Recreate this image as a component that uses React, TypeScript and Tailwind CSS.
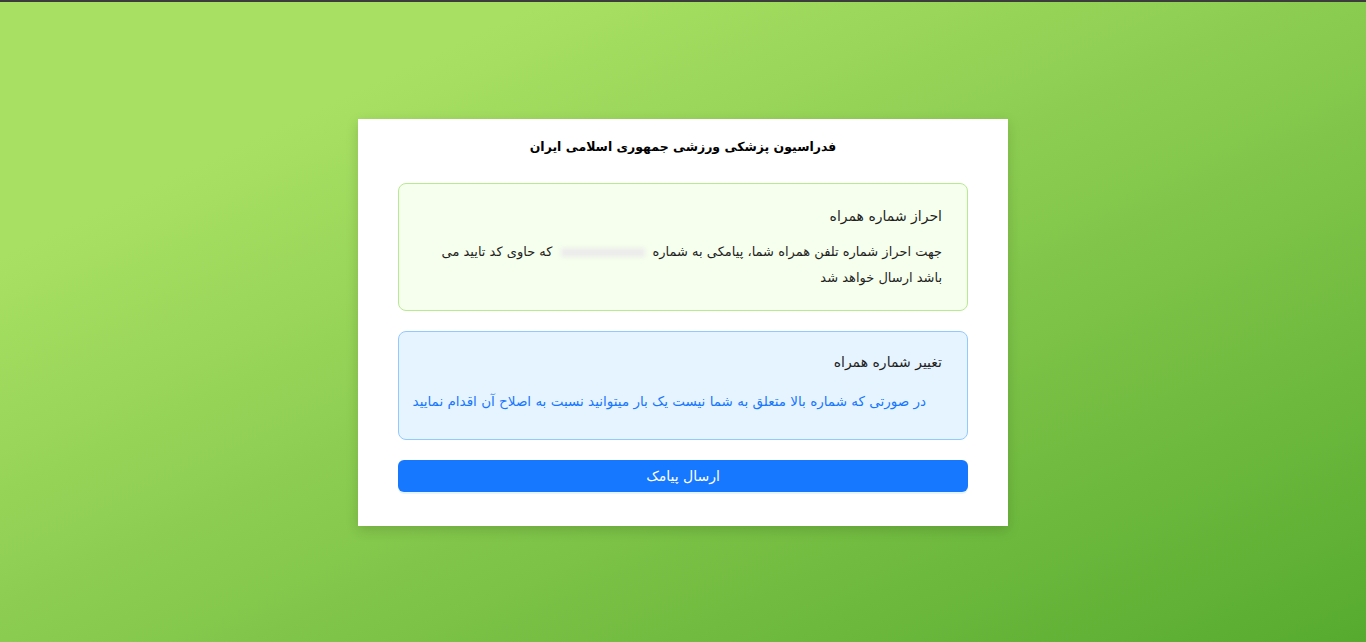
export default function App() {
  return (
    <div
      dir="rtl"
      className="min-h-[642px] w-full border-t-2 border-[#3c3c3c] bg-gradient-to-br from-[#a8e063] from-20% to-[#56ab2f] flex justify-center pt-[117px]"
      style={{ fontFamily: '"DejaVu Sans", "Noto Sans", sans-serif' }}
    >
      <div className="w-[650px] h-[407px] bg-white shadow-[0_4px_12px_rgba(0,0,0,0.15)] px-10 pt-[19px]">
        <h1 className="text-center text-[12.5px] font-bold text-black leading-[18px]">
          فدراسیون پزشکی ورزشی جمهوری اسلامی ایران
        </h1>

        <div className="mt-[27px] rounded-lg border border-[#b7eb8f] bg-[#f6ffed] pr-[25px] pl-4 pt-[22px] pb-[19px]">
          <div className="text-[14px] text-[#1f1f1f] leading-[20px]">احراز شماره همراه</div>
          <p className="mt-[13px] text-[13px] leading-[26px] text-[#1f1f1f]">
            <span>جهت احراز شماره تلفن همراه شما، پیامکی به شماره</span>
            <span className="inline-block align-middle mx-2 w-[84px] h-[9px] bg-[#ececec] blur-[2px]" />
            <span>که حاوی کد تایید می</span>
            <br />
            <span>باشد ارسال خواهد شد</span>
          </p>
        </div>

        <div className="mt-[20px] rounded-lg border border-[#91caff] bg-[#e6f4ff] pr-[25px] pl-2 pt-[20px] pb-[28px]">
          <div className="text-[14px] text-[#1f1f1f] leading-[20px]">تغییر شماره همراه</div>
          <p className="mt-[19px] pr-4 text-[13.5px] leading-[20px] text-[#1677ff] whitespace-nowrap">
            در صورتی که شماره بالا متعلق به شما نیست یک بار میتوانید نسبت به اصلاح آن اقدام نمایید
          </p>
        </div>

        <button className="mt-[20px] w-full h-8 rounded-md bg-[#1677ff] text-white text-[14px] font-normal shadow-[0_2px_0_rgba(5,145,255,0.1)]">
          ارسال پیامک
        </button>
      </div>
    </div>
  )
}
